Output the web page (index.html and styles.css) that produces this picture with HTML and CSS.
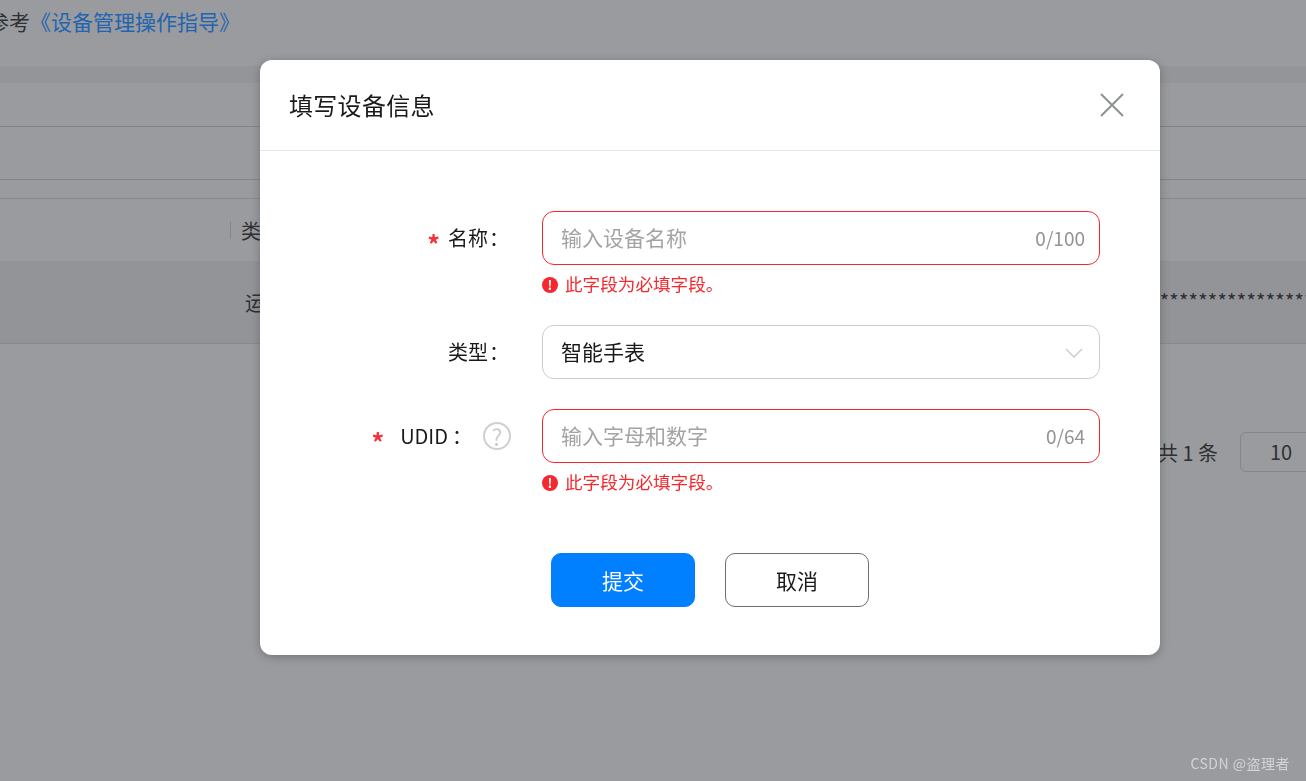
FILE: index.html

```html
<!doctype html>
<html lang="zh-CN">

<head>
  <meta charset="utf-8">
  <meta name="viewport" content="width=device-width, initial-scale=1.0">
  <title>填写设备信息</title>
  <link rel="stylesheet" href="styles.css">
</head>

<body>
  <div class="page">
    <div class="tip">参考<a class="tip-link">《设备管理操作指导》</a></div>
    <div class="band"></div>
    <div class="filter-row filter-row-first"></div>
    <div class="filter-row filter-row-second"></div>
    <div class="table-head">
      <span class="table-divider"></span>
      <span>类型</span>
    </div>
    <div class="table-row">
      <span class="table-status">运行中</span>
      <span class="table-secret">************************************</span>
    </div>
    <div class="pager">
      <span class="pager-total">共 1 条</span>
      <span class="pager-size">10</span>
    </div>
  </div>

  <div class="overlay">
    <div class="dialog">
      <div class="dialog-head">
        <h2 class="dialog-title">填写设备信息</h2>
        <svg class="dialog-close" width="24" height="24" viewBox="0 0 24 24">
          <path d="M1 1 L23 23 M23 1 L1 23" />
        </svg>
      </div>

      <div class="dialog-body">
        <div class="form-row">
          <div class="form-label"><span class="star">*</span>名称<span class="colon">：</span></div>
          <div class="form-field">
            <div class="input input-error">
              <span class="placeholder">输入设备名称</span>
              <span class="counter">0/100</span>
            </div>
            <div class="error-text">
              <span class="error-icon">!</span><span>此字段为必填字段。</span>
            </div>
          </div>
        </div>

        <div class="form-row">
          <div class="form-label">类型<span class="colon">：</span></div>
          <div class="form-field">
            <div class="input">
              <span class="value">智能手表</span>
              <svg class="chevron" width="18" height="10" viewBox="0 0 18 10">
                <path d="M1 1 L9 9 L17 1" />
              </svg>
            </div>
          </div>
        </div>

        <div class="form-row form-row-last">
          <div class="form-label form-label-help">
            <span class="star star-wide">*</span>UDID<span class="colon">：</span><span class="help">?</span>
          </div>
          <div class="form-field">
            <div class="input input-error">
              <span class="placeholder">输入字母和数字</span>
              <span class="counter">0/64</span>
            </div>
            <div class="error-text">
              <span class="error-icon">!</span><span>此字段为必填字段。</span>
            </div>
          </div>
        </div>

        <div class="actions">
          <button class="button button-primary">提交</button>
          <button class="button">取消</button>
        </div>
      </div>
    </div>
  </div>

  <div class="watermark">CSDN @盗理者</div>
</body>
</html>
```

FILE: styles.css

```css
html {
  font-family: "Noto Sans CJK SC", "Noto Sans", sans-serif;
  font-size: 20px;
}

body {
  margin: 0;
  height: 100vh;
  overflow: hidden;
  background-color: #9a9b9f;
  color: #2f3034;
}

/* page behind the dialog */
.page {
  width: 1306px;
}

.tip {
  height: 66px;
  margin-left: -12px;
  font-size: 21px;
  line-height: 42px;
}

.tip-link {
  color: #2164b0;
}

.band {
  height: 17px;
  background-color: #949599;
}

.filter-row {
  border-bottom: 1px solid #838488;
}

.filter-row-first {
  height: 43px;
}

.filter-row-second {
  height: 52px;
  margin-bottom: 18px;
}

.table-head {
  display: flex;
  align-items: center;
  gap: 10px;
  height: 62px;
  padding-left: 230px;
  border-top: 1px solid #88898d;
}

.table-divider {
  width: 1px;
  height: 18px;
  background-color: #86878b;
}

.table-row {
  display: grid;
  grid-template-columns: 245px 905px 1fr;
  align-items: center;
  height: 82px;
  background-color: #939498;
  border-bottom: 1px solid #88898d;
}

.table-status {
  grid-column: 2;
}

.table-secret {
  overflow: hidden;
  white-space: nowrap;
  margin-top: -4px;
  letter-spacing: 0.3px;
}

.pager {
  display: flex;
  align-items: center;
  gap: 22px;
  margin-top: 88px;
  padding-left: 1158px;
}

.pager-total {
  flex: none;
  white-space: nowrap;
}

.pager-size {
  flex: none;
  width: 80px;
  height: 38px;
  line-height: 38px;
  text-align: center;
  border: 1px solid #85868a;
  border-radius: 6px;
}

/* dialog */
.overlay {
  position: fixed;
  top: 0;
  left: 0;
  right: 0;
  bottom: 0;
  padding: 60px 0 0 260px;
}

.dialog {
  width: 900px;
  height: 595px;
  background-color: #fff;
  border-radius: 12px;
  box-shadow: 0 2px 10px rgba(0, 0, 0, 0.25);
  color: #1a1a1a;
}

.dialog-head {
  display: flex;
  align-items: center;
  justify-content: space-between;
  height: 90px;
  padding: 0 36px 0 30px;
  border-bottom: 1px solid #e6e6e6;
}

.dialog-title {
  margin: -2px 0 0 -1px;
  font-size: 24px;
  font-weight: 400;
  letter-spacing: 0.3px;
}

.dialog-close path {
  fill: none;
  stroke: #8b9391;
  stroke-width: 2;
}

.dialog-body {
  padding-top: 60px;
}

.form-row {
  display: flex;
  margin-bottom: 30px;
}

.form-row-last {
  margin-bottom: 60px;
}

.form-label {
  display: flex;
  flex: none;
  align-items: center;
  justify-content: flex-end;
  box-sizing: border-box;
  width: 282px;
  height: 54px;
  padding-right: 34px;
  padding-bottom: 2px;
  color: #1a1a1a;
}

.form-label-help {
  padding-right: 31px;
}

.colon {
  padding-left: 1px;
  margin-right: -1px;
}

.form-label-help .colon {
  padding-left: 4px;
  margin-right: -4px;
}

.star {
  margin-top: 12px;
  margin-right: 8px;
  color: #f5323c;
  font-size: 25px;
  font-weight: 700;
  line-height: 25px;
}

.star-wide {
  margin-right: 16px;
}

.help {
  flex: none;
  width: 24px;
  height: 24px;
  margin-left: 15px;
  margin-top: 2px;
  border: 2px solid #cfcfcf;
  border-radius: 50%;
  color: #cfcfcf;
  font-size: 23px;
  line-height: 24px;
  text-align: center;
}

.form-field {
  width: 558px;
}

.input {
  display: flex;
  align-items: center;
  justify-content: space-between;
  box-sizing: border-box;
  height: 54px;
  padding: 0 14px 2px 18px;
  border: 1px solid #cccccc;
  border-radius: 12px;
}

.input-error {
  border-color: #f5282d;
}

.placeholder {
  color: #a3a3a3;
  font-size: 21px;
}

.value {
  font-size: 21px;
}

.counter {
  color: #949494;
  font-size: 19px;
}

.chevron {
  margin-top: 4px;
  margin-right: 2px;
}

.chevron path {
  fill: none;
  stroke: #c8ced4;
  stroke-width: 1.5;
}

.error-text {
  display: flex;
  align-items: center;
  gap: 7px;
  height: 30px;
  margin-top: 3px;
  margin-bottom: -3px;
  color: #f5282d;
  font-size: 17.6px;
}

.error-icon {
  flex: none;
  width: 16px;
  height: 16px;
  margin-top: 4px;
  border-radius: 50%;
  background-color: #f5282d;
  color: #fff;
  font-size: 13px;
  font-weight: 700;
  line-height: 16px;
  text-align: center;
}

.actions {
  display: flex;
  justify-content: center;
  gap: 30px;
}

.button {
  width: 144px;
  height: 54px;
  padding: 0;
  background-color: #fff;
  border: 1px solid #6e6e6e;
  border-radius: 10px;
  color: #1a1a1a;
  font-family: inherit;
  font-size: 21px;
}

.button-primary {
  background-color: #007fff;
  border-color: #007fff;
  color: #fff;
}

.watermark {
  position: fixed;
  right: 16px;
  bottom: 8px;
  color: #d4d4d6;
  font-size: 14px;
  letter-spacing: 0.5px;
}
```
